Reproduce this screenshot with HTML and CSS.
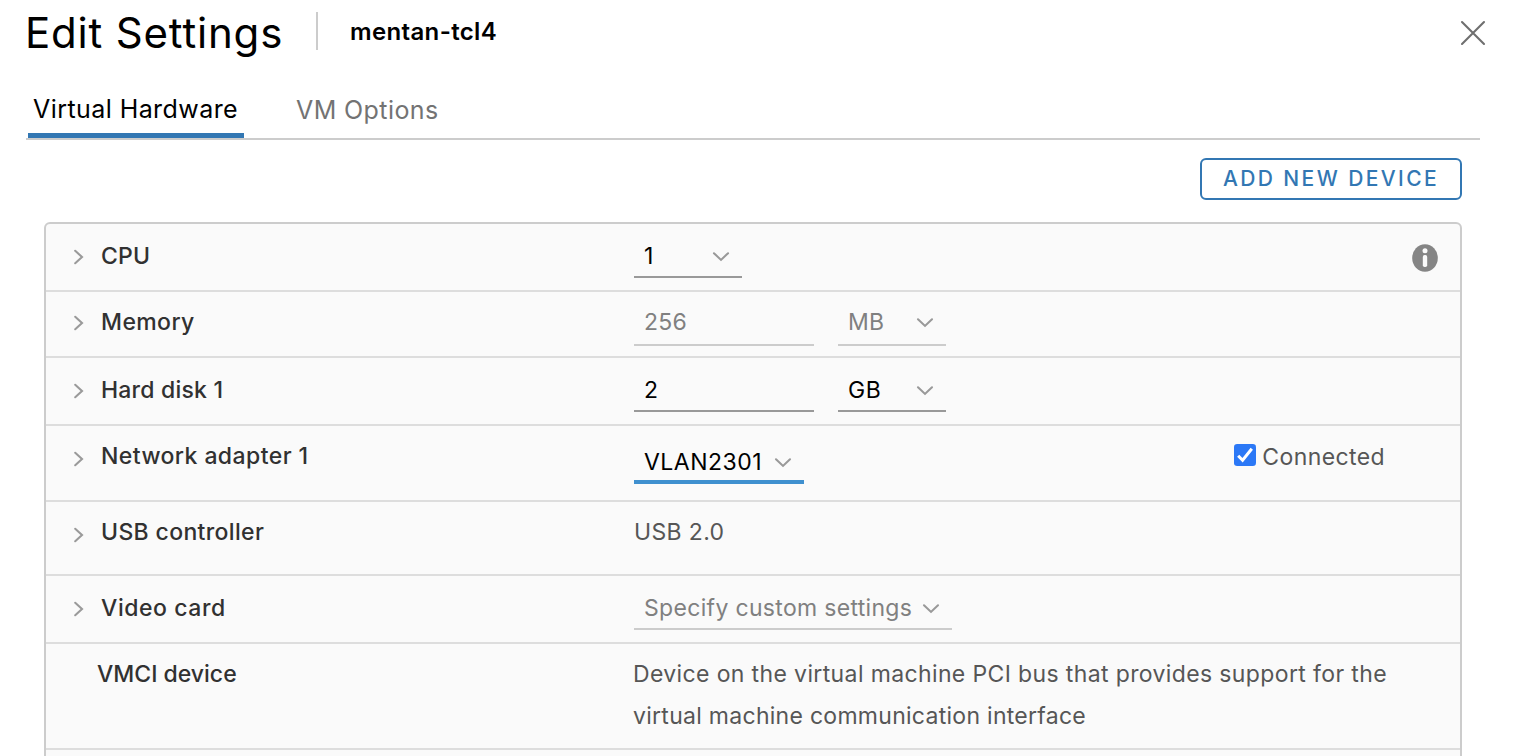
FILE: index.html
```html
<!DOCTYPE html>
<html lang="en">
<head>
<meta charset="utf-8">
<title>Edit Settings</title>
<link rel="stylesheet" href="styles.css">
</head>
<body>
<svg class="defs" aria-hidden="true">
  <symbol id="right" viewBox="0 0 12 18"><path d="M2.2 2.8 9 9 2.2 15.2"/></symbol>
  <symbol id="down" viewBox="0 0 18 12"><path d="M2 2.3 9 8.9 16 2.3"/></symbol>
</svg>
<main class="dialog">
  <header class="header">
    <h1 class="title">Edit Settings</h1>
    <span class="vm-name">mentan-tcl4</span>
    <button class="close" aria-label="Close"><svg viewBox="0 0 28 28"><path d="M3 3 25 25M25 3 3 25"/></svg></button>
  </header>
  <nav class="tabs">
    <button class="tab tab-active">Virtual Hardware</button>
    <button class="tab tab-options">VM Options</button>
  </nav>
  <div class="toolbar"><button class="add">ADD NEW DEVICE</button></div>
  <section class="panel">
    <div class="row row-cpu">
      <div class="name"><svg class="caret"><use href="#right"/></svg><span class="t-cpu">CPU</span></div>
      <div class="value"><span class="field select unit"><span>1</span><svg class="down"><use href="#down"/></svg></span></div>
      <svg class="info" viewBox="0 0 28 30"><ellipse cx="14" cy="15" rx="12.8" ry="13.7"/><circle class="mark" cx="14" cy="7.7" r="2.5"/><rect class="mark" x="11.8" y="12.1" width="4.4" height="12" rx="1.8"/></svg>
    </div>
    <div class="row row-memory">
      <div class="name"><svg class="caret"><use href="#right"/></svg><span class="t-memory">Memory</span></div>
      <div class="value"><span class="field input disabled t-256">256</span><span class="field select unit disabled"><span class="t-mb">MB</span><svg class="down"><use href="#down"/></svg></span></div>
    </div>
    <div class="row row-disk">
      <div class="name"><svg class="caret"><use href="#right"/></svg><span class="t-disk">Hard disk 1</span></div>
      <div class="value"><span class="field input">2</span><span class="field select unit"><span class="t-gb">GB</span><svg class="down"><use href="#down"/></svg></span></div>
    </div>
    <div class="row row-network">
      <div class="name"><svg class="caret caret-low"><use href="#right"/></svg><span class="t-network">Network adapter 1</span></div>
      <div class="value"><span class="field select network focused"><span class="t-vlan">VLAN2301</span><svg class="down"><use href="#down"/></svg></span></div>
      <label class="connected"><svg class="check" viewBox="0 0 22 22"><rect width="22" height="22" rx="3.2"/><path d="M4.2 11.7 8.6 16.2 17.8 4.8"/></svg>Connected</label>
    </div>
    <div class="row row-usb">
      <div class="name"><svg class="caret caret-low"><use href="#right"/></svg><span class="t-usb">USB controller</span></div>
      <div class="value t-usb2">USB 2.0</div>
    </div>
    <div class="row row-video">
      <div class="name"><svg class="caret"><use href="#right"/></svg><span class="t-video">Video card</span></div>
      <div class="value"><span class="field select video disabled"><span class="t-specify">Specify custom settings</span><svg class="down"><use href="#down"/></svg></span></div>
    </div>
    <div class="row row-vmci">
      <div class="name name-plain">VMCI device</div>
      <div class="value"><span class="t-line1">Device on the virtual machine PCI bus that provides support for the</span><br><span class="t-line2">virtual machine communication interface</span></div>
    </div>
  </section>
</main>
</body>
</html>
```

FILE: styles.css
```css
* { box-sizing: border-box; }
body { margin: 0; height: 756px; overflow: hidden; background: #fff; color: #000; font: 400 23px/42px Inter, sans-serif; font-kerning: normal; }
button { padding: 0; border: 0; background: none; color: inherit; font: inherit; }
svg { display: block; flex: none; }
.defs { position: absolute; width: 0; height: 0; }
.dialog { padding: 0 29px 0 26px; }

.header { display: flex; align-items: flex-start; height: 86px; padding-top: 12px; }
.title { width: 292px; height: 38px; margin: 0; border-right: 2px solid #ccc; font-size: 42px; font-weight: 400; line-height: 41px; letter-spacing: .82px; text-indent: -1px; white-space: nowrap; }
.vm-name { margin-left: 32px; font-size: 24px; font-weight: 600; line-height: 39px; letter-spacing: .35px; }
.close { margin: 7px 0 0 auto; }
.close svg { width: 28px; height: 28px; fill: none; stroke: #6f6f6f; stroke-width: 2.1; stroke-linecap: round; }

.tabs { display: flex; gap: 46px; width: 1454px; height: 54px; padding-left: 2px; border-bottom: 2px solid #ccc; font-size: 25px; }
.tab { height: 52px; padding: 0 6px 4px; }
.tab-active { width: 216px; padding: 0 5px; border-bottom: 5px solid #3277b3; text-align: left; letter-spacing: .43px; line-height: 47px; white-space: nowrap; }
.tab-options { color: #737373; letter-spacing: .41px; }

.toolbar { display: flex; justify-content: flex-end; width: 1436px; height: 82px; padding-top: 18px; }
.add { width: 262px; height: 42px; border: 2px solid #3277b3; border-radius: 6px; color: #3277b3; font-size: 21px; font-weight: 500; line-height: 38px; letter-spacing: 2.4px; white-space: nowrap; }

.panel { width: 1418px; height: 560px; margin-left: 18px; border: 2px solid #ccc; border-radius: 6px; background: #fafafa; overflow: hidden; }
.row { display: grid; grid-template-columns: 587px 1fr auto; align-items: start; border-bottom: 2px solid #ddd; color: #565656; }
.row-cpu { height: 68px; padding-top: 11px; }
.row-memory { height: 66px; padding-top: 9px; }
.row-disk { height: 68px; padding-top: 11px; }
.row-network { height: 76px; padding-top: 9px; }
.row-usb { height: 74px; padding-top: 9px; }
.row-video { height: 68px; padding-top: 11px; }
.row-vmci { height: 106px; padding-top: 9px; }

.name { display: flex; align-items: center; gap: 16px; padding-left: 27px; color: #313131; font-weight: 500; white-space: nowrap; }
.name-plain { padding-left: 51px; }
.caret { width: 12px; height: 18px; margin-top: 2px; fill: none; stroke: #9a9a9a; stroke-width: 2.1; stroke-linecap: round; }
.caret-low { margin-top: 6px; }
.value { display: flex; flex-wrap: wrap; gap: 0 24px; padding-left: 1px; white-space: nowrap; }
.field { display: block; height: 43px; padding-left: 10px; border-bottom: 2px solid #999; color: #000; }
.input { width: 180px; }
.select { display: flex; align-items: flex-start; justify-content: space-between; line-height: 42px; }
.unit { width: 108px; padding-right: 12px; }
.down { width: 18px; height: 12px; margin-top: 16px; fill: none; stroke: #999; stroke-width: 2.1; stroke-linecap: round; }
.row-memory .field { height: 45px; }
.disabled { border-color: #ccc; color: #808080; }
.network { width: 170px; height: 49px; padding-top: 6px; padding-right: 12px; }
.focused { border-bottom: 4px solid #3f90cf; }
.video { width: 318px; padding-right: 12px; }
.info { width: 28px; height: 30px; margin: 8px 21px 0 0; fill: #858585; }
.info .mark { fill: #fafafa; }
.connected { display: flex; align-items: center; gap: 6px; margin: 1px 75px 0 0; letter-spacing: .4px; }
.check { width: 22px; height: 22px; margin-top: -4px; fill: #2b78f6; }
.check path { fill: none; stroke: #fff; stroke-width: 3; }

.t-cpu { letter-spacing: .2px; }
.t-memory { letter-spacing: .39px; }
.t-disk { letter-spacing: .2px; }
.t-network { letter-spacing: .43px; }
.t-usb { letter-spacing: .35px; }
.t-video { letter-spacing: .57px; }
.t-256 { letter-spacing: .3px; }
.t-mb { letter-spacing: .3px; }
.t-gb { letter-spacing: .6px; }
.t-vlan { letter-spacing: .5px; }
.t-specify { letter-spacing: .32px; }
.t-usb2 { letter-spacing: .35px; }
.t-line1, .t-line2 { margin-left: -1px; }
.t-line1 { letter-spacing: .37px; }
.t-line2 { letter-spacing: .28px; }
```
